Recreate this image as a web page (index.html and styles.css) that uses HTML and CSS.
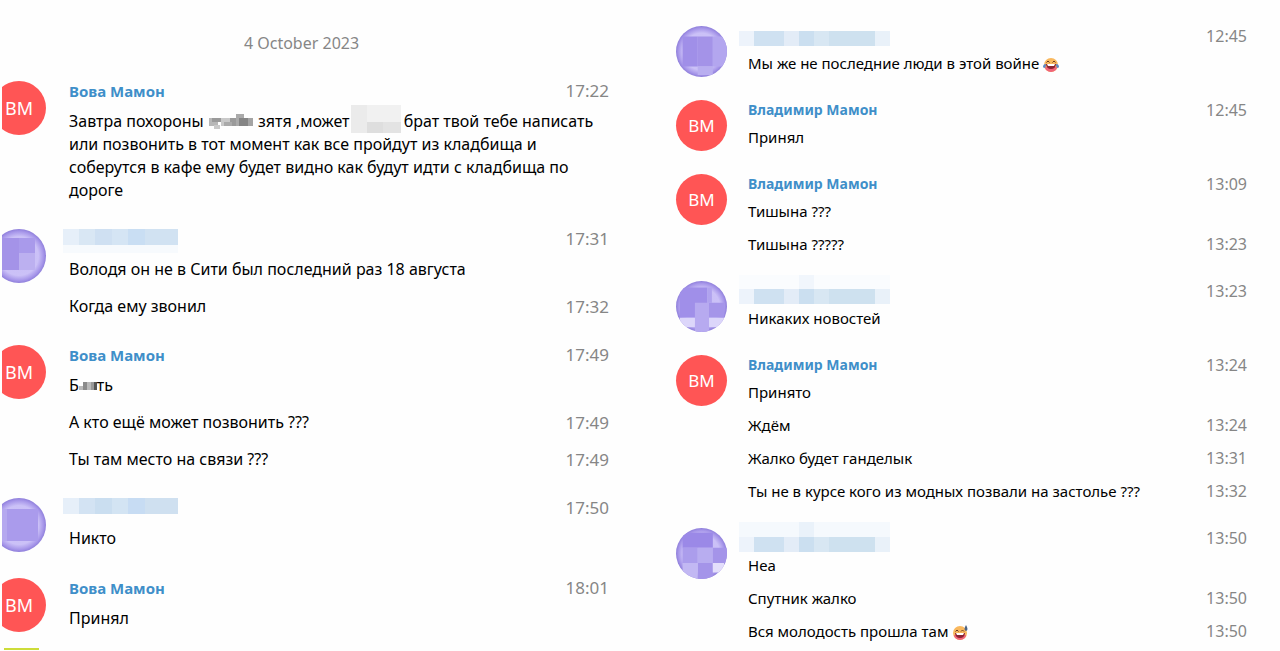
FILE: index.html
```html
<!DOCTYPE html>
<html lang="ru">
<head>
<meta charset="utf-8">
<meta name="viewport" content="width=device-width, initial-scale=1">
<title>4 October 2023</title>
<link rel="stylesheet" href="styles.css">
</head>
<body>
<svg class="defs" width="0" height="0" aria-hidden="true">
  <defs>
    <radialGradient id="violet" cx="50%" cy="50%" r="50%">
      <stop offset="0" stop-color="#c9bff6"/>
      <stop offset="0.72" stop-color="#cbc1f7"/>
      <stop offset="0.9" stop-color="#a898ea"/>
      <stop offset="1" stop-color="#8f7fdb"/>
    </radialGradient>
    <clipPath id="disc"><circle cx="27" cy="27" r="27"/></clipPath>
    <g id="name-mask">
      <path fill="#edf3fb" d="M0 0h16v15H0z"/><path fill="#cfe1f1" d="M15 0h30v15H15z"/><path fill="#e3ecf7" d="M45 0h15v15H45z"/><path fill="#cbdff0" d="M60 0h15v15H60z"/><path fill="#d8e7f3" d="M75 0h15v15H75z"/><path fill="#cee1ef" d="M90 0h46v15H90z"/><path fill="#e9f1f9" d="M136 0h15v15h-15z"/>
    </g>
  </defs>
</svg>
<main class="page">
  <section class="chat chat-large">
    <h1 class="date">4 October 2023</h1>

    <article class="group">
      <div class="avatar avatar-red">ВМ</div>
      <div class="body">
        <header class="row head"><span class="name">Вова Мамон</span><time>17:22</time></header>
        <div class="row"><p>Завтра похороны <svg class="mask" width="46" height="20" viewBox="0 0 46 20"><path fill="#b7b7b7" d="M1 5h9v8H1z"/><path fill="#9a9a9a" d="M4 5h9v4H4zM22 5h6v8h-6z"/><path fill="#c9c9c9" d="M6 12h6v4H6zM13 5h9v8h-9z"/><path fill="#aaa" d="M16 9h8v4h-8zM28 1h8v12h-8z"/><path fill="#858585" d="M31 5h9v8h-9z"/><path fill="#a4a4a4" d="M40 5h5v8h-5z"/></svg> зятя ,может <svg class="mask mask-tall" width="50" height="28" viewBox="0 0 50 28"><path fill="#ebebeb" d="M0 0h16v28H0z"/><path fill="#f1f1f1" d="M16 0h34v17H16z"/><path fill="#dedede" d="M16 17h16v11H16z"/><path fill="#e3e3e3" d="M32 17h18v11H32z"/></svg>брат твой тебе написать<br>или позвонить в тот момент как все пройдут из кладбища и<br>соберутся в кафе ему будет видно как будут идти с кладбища по<br>дороге</p></div>
      </div>
    </article>

    <article class="group">
      <svg class="avatar" viewBox="0 0 54 54"><g clip-path="url(#disc)"><path fill="url(#violet)" d="M0 0h54v54H0z"/><path fill="#a493e8" d="M0 9h27v32H0z"/><path fill="#a99aeb" d="M27 9h16v15H27z"/><path fill="#bcb0f0" d="M27 24h16v17H27z"/></g></svg>
      <div class="body">
        <header class="row head"><svg class="hidden-name" width="115" height="24" viewBox="0 0 115 24"><path fill="#f7fafd" d="M0 16h115v8H0z"/><path fill="#e6eff9" d="M0 0h16v16H0z"/><path fill="#d9e7f4" d="M16 0h16v16H16z"/><path fill="#cfe0f2" d="M32 0h17v16H32z"/><path fill="#d5e5f4" d="M49 0h16v16H49z"/><path fill="#c9def3" d="M65 0h17v16H65z"/><path fill="#d1e2f2" d="M82 0h33v16H82z"/></svg><time>17:31</time></header>
        <div class="row"><p>Володя он не в Сити был последний раз 18 августа</p></div>
        <div class="row"><p>Когда ему звонил</p><time>17:32</time></div>
      </div>
    </article>

    <article class="group">
      <div class="avatar avatar-red">ВМ</div>
      <div class="body">
        <header class="row head"><span class="name">Вова Мамон</span><time>17:49</time></header>
        <div class="row"><p>Б<svg class="mask" width="18" height="20" viewBox="0 0 18 20"><path fill="#b9b9b9" d="M0 9h4v4H0zM8 5h4v8H8z"/><path fill="#8a8a8a" d="M4 5h4v8H4z"/><path fill="#999" d="M12 5h3v8h-3z"/><path fill="#555" d="M15 5h3v8h-3z"/></svg>ть</p></div>
        <div class="row"><p>А кто ещё может позвонить ???</p><time>17:49</time></div>
        <div class="row"><p>Ты там место на связи ???</p><time>17:49</time></div>
      </div>
    </article>

    <article class="group">
      <svg class="avatar" viewBox="0 0 54 54"><g clip-path="url(#disc)"><path fill="url(#violet)" d="M0 0h54v54H0z"/><path fill="#aa9bec" d="M15 11h31v32H15z"/><path fill="#b5a8ef" d="M0 11h15v32H0z"/></g></svg>
      <div class="body">
        <header class="row head"><svg class="hidden-name" width="115" height="24" viewBox="0 0 115 24"><path fill="#e6eff9" d="M0 0h16v16H0z"/><path fill="#d3e3f3" d="M16 0h16v16H16z"/><path fill="#cadef0" d="M32 0h17v16H32z"/><path fill="#d3e4f3" d="M49 0h16v16H49z"/><path fill="#c7dcf3" d="M65 0h17v16H65z"/><path fill="#cfe0f0" d="M82 0h33v16H82z"/></svg><time>17:50</time></header>
        <div class="row"><p>Никто</p></div>
      </div>
    </article>

    <article class="group">
      <div class="avatar avatar-red">ВМ</div>
      <div class="body">
        <header class="row head"><span class="name">Вова Мамон</span><time>18:01</time></header>
        <div class="row"><p>Принял</p></div>
      </div>
    </article>
    <div class="next-avatar"></div>
  </section>

  <section class="chat chat-small">
    <article class="group">
      <svg class="avatar" viewBox="0 0 54 54"><g clip-path="url(#disc)"><path fill="url(#violet)" d="M0 0h54v54H0z"/><path fill="#a08fe8" d="M7 11h16v32H7z"/><path fill="#a493e8" d="M23 11h16v32H23z"/><path fill="#b3a6ef" d="M39 11h15v32H39z"/><path fill="#b9aef0" d="M23 43h16v9H23z"/></g></svg>
      <div class="body">
        <header class="row head"><svg class="hidden-name" width="151" height="22" viewBox="0 0 151 22"><use href="#name-mask" y="6"/></svg><time>12:45</time></header>
        <div class="row"><p>Мы же не последние люди в этой войне <svg class="emoji" width="16" height="16" viewBox="0 0 16 16"><circle cx="8" cy="8" r="7" fill="#f9b85e"/><path fill="#f0647a" d="M2 10h12a6 5 0 0 1-12 0z"/><path fill="#8d2331" d="M3 7h10q-.5 5-5 5T3 7z"/><path fill="#fff" d="M4 7h8l-1 2H5z"/><path fill="none" stroke="#6b3a20" stroke-width="1" d="M3.500 5.500 5 4l1.500 1.500M9.500 5.500 11 4l1.500 1.500"/><path fill="#5b87c5" d="M0 10q0-3 3-3 0 4-2 4zM16 10q0-3-3-3 0 4 2 4z"/></svg></p></div>
      </div>
    </article>

    <article class="group">
      <div class="avatar avatar-red">ВМ</div>
      <div class="body">
        <header class="row head"><span class="name">Владимир Мамон</span><time>12:45</time></header>
        <div class="row"><p>Принял</p></div>
      </div>
    </article>

    <article class="group">
      <div class="avatar avatar-red">ВМ</div>
      <div class="body">
        <header class="row head"><span class="name">Владимир Мамон</span><time>13:09</time></header>
        <div class="row"><p>Тишына ???</p></div>
        <div class="row"><p>Тишына ?????</p><time>13:23</time></div>
      </div>
    </article>

    <article class="group">
      <svg class="avatar" viewBox="0 0 54 54"><g clip-path="url(#disc)"><path fill="url(#violet)" d="M0 0h54v54H0z"/><path fill="#a08fe9" d="M4 7h29v32H4z"/><path fill="#b0a3ee" d="M33 7h5v16h-5z"/><path fill="#a595e9" d="M33 23h18v16H33z"/><path fill="#b7aaf0" d="M20 23h15v31H20z"/><path fill="#dcd6fa" d="M4 39h16v10H4zM35 39h16v10H35z"/></g></svg>
      <div class="body">
        <header class="row head"><svg class="hidden-name hidden-name-tall" width="151" height="30" viewBox="0 0 151 30"><path fill="#fafcfe" d="M0 0h151v14H0z"/><path fill="#f1f6fc" d="M60 0h15v14H60z"/><use href="#name-mask" y="14"/></svg><time>13:23</time></header>
        <div class="row"><p>Никаких новостей</p></div>
      </div>
    </article>

    <article class="group">
      <div class="avatar avatar-red">ВМ</div>
      <div class="body">
        <header class="row head"><span class="name">Владимир Мамон</span><time>13:24</time></header>
        <div class="row"><p>Принято</p></div>
        <div class="row"><p>Ждём</p><time>13:24</time></div>
        <div class="row"><p>Жалко будет ганделык</p><time>13:31</time></div>
        <div class="row"><p>Ты не в курсе кого из модных позвали на застолье ???</p><time>13:32</time></div>
      </div>
    </article>

    <article class="group">
      <svg class="avatar" viewBox="0 0 54 54"><g clip-path="url(#disc)"><path fill="url(#violet)" d="M0 0h54v54H0z"/><path fill="#9b89e7" d="M7 5h32v16H7z"/><path fill="#ab9dec" d="M7 21h16v16H7z"/><path fill="#b8adf0" d="M23 21h16v16H23z"/><path fill="#a494e9" d="M39 21h15v16H39zM23 37h16v17H23z"/><path fill="#c2b8f3" d="M7 37h16v17H7z"/><path fill="#e3defb" d="M39 37h12v10H39z"/></g></svg>
      <div class="body">
        <header class="row head"><svg class="hidden-name hidden-name-tall" width="151" height="30" viewBox="0 0 151 30"><path fill="#f5f9fd" d="M0 0h151v15H0z"/><path fill="#eaf2fa" d="M60 0h15v15H60z"/><use href="#name-mask" y="15"/></svg><time>13:50</time></header>
        <div class="row"><p>Неа</p></div>
        <div class="row"><p>Спутник жалко</p><time>13:50</time></div>
        <div class="row"><p>Вся молодость прошла там <svg class="emoji" width="16" height="16" viewBox="0 0 16 16"><circle cx="8" cy="8" r="7" fill="#f9b85e"/><path fill="#f0647a" d="M2 10h12a6 5 0 0 1-12 0z"/><path fill="#8d2331" d="M3 8h10q-.5 5-5 5T3 8z"/><path fill="#fff" d="M4 8h8l-1 2H5z"/><path fill="none" stroke="#6b3a20" stroke-width="1" d="M3.500 6.500 5 5l1.500 1.500M9 6.500l1.500-1.500L12 6.500"/><path fill="#4d6484" d="M14 0q3 5 0 6-3-1 0-6z"/></svg></p><time>13:50</time></div>
      </div>
    </article>
  </section>
</main>
</body>
</html>
```
FILE: styles.css
```css
* {
  box-sizing: border-box;
}

body {
  margin: 0;
  background: #fefefe;
  color: #000;
  font-family: "Noto Sans", "Open Sans", sans-serif;
}

.defs {
  position: absolute;
}

.page {
  display: grid;
  grid-template-columns: 1fr 1fr;
  min-height: 100vh;
}

.chat {
  display: flex;
  flex-direction: column;
}

.chat-large {
  --avatar: 54px;
  --line: 23px;
  --name-size: 15px;
  --time-size: 17px;
  --initials-size: 18px;
  gap: 26px;
  margin-left: 2px;
  padding: 31px 31px 0 0;
  overflow: hidden;
  font-size: 16px;
}

.chat-small {
  --avatar: 51px;
  --line: 22px;
  --name-size: 14px;
  --time-size: 16px;
  --initials-size: 17px;
  gap: 23px;
  padding: 26px 33px 0 36px;
  font-size: 15px;
}

.date {
  margin: 0;
  padding-right: 8px;
  color: #868686;
  font-size: 16px;
  font-weight: 400;
  line-height: 24px;
  text-align: center;
}

.group {
  display: flex;
  gap: 21px;
}

.chat-large .group {
  gap: 23px;
  margin-left: -10px;
}

.avatar {
  flex: none;
  width: var(--avatar);
  height: var(--avatar);
}

.avatar-red {
  display: flex;
  align-items: center;
  justify-content: center;
  border-radius: 50%;
  background: #ff5555;
  color: #fff;
  font-size: var(--initials-size);
  line-height: 22px;
}

.body {
  display: flex;
  flex: 1;
  flex-direction: column;
  gap: 14px;
  min-width: 0;
  padding-bottom: 1px;
}

.chat-small .body {
  gap: 11px;
  padding-bottom: 3px;
}

.row {
  display: flex;
  align-items: flex-start;
  justify-content: space-between;
  line-height: var(--line);
}

.head {
  height: 22px;
  margin-bottom: -7px;
  line-height: 20px;
}

.name {
  color: #3f8fc9;
  font-size: var(--name-size);
  font-weight: 700;
}

.row p {
  margin: 0;
}

time {
  color: #868686;
  font-size: var(--time-size);
}

.hidden-name {
  flex: none;
  margin-left: -6px;
}

.chat-small .hidden-name {
  margin-top: -1px;
  margin-left: -9px;
}

.chat-small .hidden-name-tall {
  margin-top: -6px;
}

.mask,
.emoji {
  vertical-align: middle;
}

.mask-tall {
  margin: -8px 3px 0 -3px;
}

.next-avatar {
  width: 35px;
  height: 2px;
  margin: -10px 0 0 2px;
  background: #cddc39;
}
```
